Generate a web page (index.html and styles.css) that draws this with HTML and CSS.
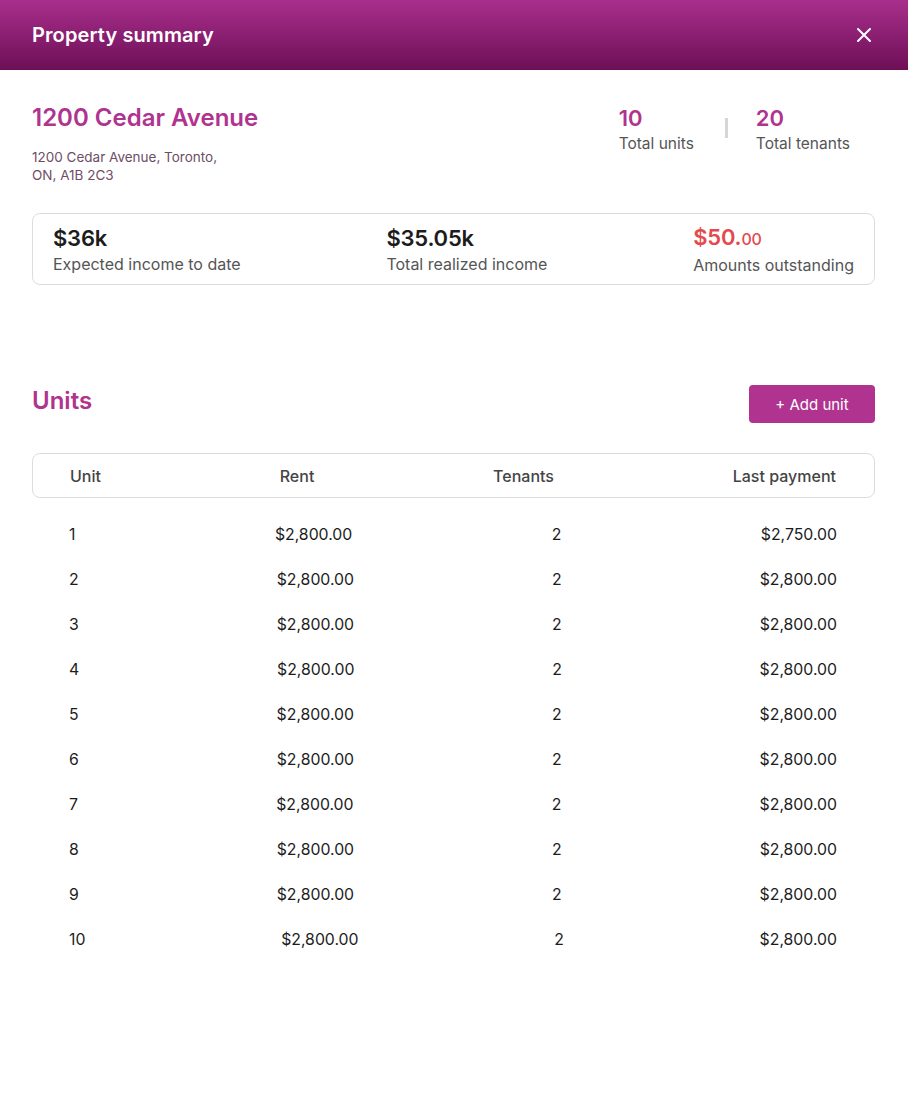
FILE: index.html
```html
<!DOCTYPE html>
<html>
<head>
<meta charset="utf-8">
<link rel="stylesheet" href="styles.css">
</head>
<body>
<div class="modal">
  <header class="topbar">
    <h1 class="topbar-title">Property summary</h1>
    <button class="close" aria-label="Close">
      <svg width="16" height="16" viewBox="0 0 16 16"><path d="M2 2 L14 14 M14 2 L2 14" stroke="#fff" stroke-width="2" stroke-linecap="round"/></svg>
    </button>
  </header>
  <main class="content">
    <section class="overview">
      <div class="property">
        <h2 class="property-name">1200 Cedar Avenue</h2>
        <p class="address">1200 Cedar Avenue, Toronto,<br>ON, A1B 2C3</p>
      </div>
      <div class="counts">
        <div class="count">
          <div class="count-num">10</div>
          <div class="count-label">Total units</div>
        </div>
        <div class="count-divider"></div>
        <div class="count">
          <div class="count-num">20</div>
          <div class="count-label">Total tenants</div>
        </div>
      </div>
    </section>
    <section class="summary">
      <div class="stat">
        <div class="stat-value">$36k</div>
        <div class="stat-label">Expected income to date</div>
      </div>
      <div class="stat">
        <div class="stat-value">$35.05k</div>
        <div class="stat-label">Total realized income</div>
      </div>
      <div class="stat">
        <div class="stat-value stat-red">$50.<span class="cents">00</span></div>
        <div class="stat-label">Amounts outstanding</div>
      </div>
    </section>
    <section class="units-head">
      <h2 class="units-title">Units</h2>
      <button class="add-btn">+ Add unit</button>
    </section>
    <div class="table-head">
      <span>Unit</span><span>Rent</span><span>Tenants</span><span>Last payment</span>
    </div>
    <div class="rows">
      <div class="row"><span>1</span><span>$2,800.00</span><span>2</span><span>$2,750.00</span></div>
      <div class="row"><span>2</span><span>$2,800.00</span><span>2</span><span>$2,800.00</span></div>
      <div class="row"><span>3</span><span>$2,800.00</span><span>2</span><span>$2,800.00</span></div>
      <div class="row"><span>4</span><span>$2,800.00</span><span>2</span><span>$2,800.00</span></div>
      <div class="row"><span>5</span><span>$2,800.00</span><span>2</span><span>$2,800.00</span></div>
      <div class="row"><span>6</span><span>$2,800.00</span><span>2</span><span>$2,800.00</span></div>
      <div class="row"><span>7</span><span>$2,800.00</span><span>2</span><span>$2,800.00</span></div>
      <div class="row"><span>8</span><span>$2,800.00</span><span>2</span><span>$2,800.00</span></div>
      <div class="row"><span>9</span><span>$2,800.00</span><span>2</span><span>$2,800.00</span></div>
      <div class="row"><span>10</span><span>$2,800.00</span><span>2</span><span>$2,800.00</span></div>
    </div>
  </main>
</div>
</body>
</html>
```
FILE: styles.css
```css
* { box-sizing: border-box; }
html, body { margin: 0; padding: 0; background: #fff; }
body { font-family: "Inter", "Liberation Sans", sans-serif; color: #222; }
.modal { width: 908px; min-height: 1117px; background: #fff; }
.topbar {
  height: 70px;
  background: linear-gradient(180deg, #a92f8c 0%, #6d0f57 100%);
  display: flex; align-items: center; justify-content: space-between;
  padding: 0 36px 0 32px;
}
.topbar-title { margin: 0; color: #fff; font-size: 20px; font-weight: 600; letter-spacing: 0.1px; }
.close { background: none; border: 0; padding: 0; display: flex; cursor: pointer; }
.content { padding: 33px 33px 40px 32px; }
.overview { display: flex; justify-content: space-between; align-items: flex-start; }
.property-name { margin: 0; color: #b0338f; font-size: 24px; font-weight: 600; line-height: 30px; letter-spacing: 0; }
.address { margin: 15px 0 0; color: #6d4e66; font-size: 13.5px; line-height: 18px; }
.counts { display: flex; align-items: flex-start; padding-top: 1px; margin-right: 25px; }
.count-num { color: #b0338f; font-size: 22px; font-weight: 600; line-height: 28px; }
.count-label { color: #555; font-size: 15.5px; line-height: 20px; margin-top: 2px; }
.count-divider { width: 3px; height: 20px; background: #d6d6d6; margin: 14px 28px 0 31px; }
.summary {
  margin-top: 29px;
  height: 72px;
  border: 1px solid #dcdcdc; border-radius: 8px;
  display: flex; justify-content: space-between; align-items: center;
  padding: 0 20px;
}
.stat-value { font-size: 22px; font-weight: 600; line-height: 28px; color: #1c1c1c; letter-spacing: -0.2px; }
.stat-red { color: #e5484d; }
.cents { font-size: 16px; font-weight: 500; }
.stat-label { font-size: 16px; color: #555; line-height: 20px; margin-top: 2px; }
.units-head { margin-top: 100px; display: flex; justify-content: space-between; align-items: flex-start; }
.units-title { margin: 1px 0 0; color: #b0338f; font-size: 24px; font-weight: 600; line-height: 30px; letter-spacing: 0; }
.add-btn {
  width: 126px; height: 38px; border: 0; border-radius: 4px;
  background: #b0338f; color: #fff; font-family: inherit; font-size: 15px;
}
.table-head {
  margin-top: 30px; height: 45px;
  border: 1px solid #dcdcdc; border-radius: 8px;
  display: flex; justify-content: space-between; align-items: center;
  padding: 0 38px 0 37px;
  font-size: 16px; font-weight: 500; color: #444;
}
.rows { margin-top: 14px; }
.row {
  height: 45px; display: flex; justify-content: space-between; align-items: center;
  padding: 0 38px 0 37px; font-size: 15.8px; color: #1c1c1c;
}
```
